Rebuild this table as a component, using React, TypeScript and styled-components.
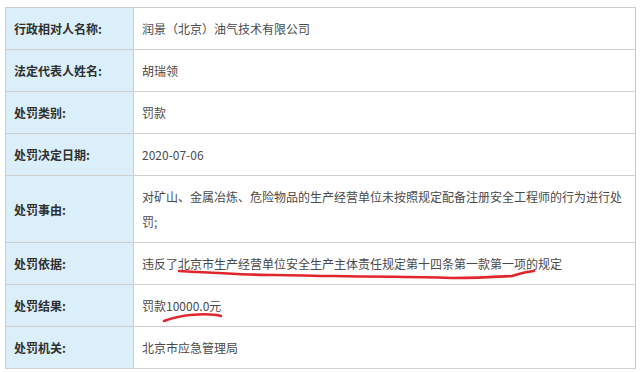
import React from 'react'
import styled, { createGlobalStyle } from 'styled-components'

const GlobalStyle = createGlobalStyle`
  body {
    margin: 0;
    background: #ffffff;
    font-family: "Noto Sans CJK SC", "Noto Sans", sans-serif;
  }
`

const Table = styled.div`
  display: grid;
  grid-template-columns: 128px 1fr;
  width: 631px;
  margin: 7px 0 0 5px;
  border: 1px solid #cbcbcb;
  border-bottom: none;
  box-sizing: border-box;
`

const Label = styled.div`
  background: #daeffa;
  color: #2f2f2f;
  font-size: 12px;
  font-weight: bold;
  line-height: 25px;
  padding: 8px 8px;
  border-right: 1px solid #cfcfcf;
  border-bottom: 1px solid #cfcfcf;
  display: flex;
  align-items: center;
`

const Value = styled.div`
  position: relative;
  color: #4a4a4a;
  font-size: 12px;
  line-height: 25px;
  padding: 8px 8px;
  border-bottom: 1px solid #cfcfcf;
  display: flex;
  align-items: center;
`

const Mark = styled.svg`
  position: absolute;
  left: 0;
  top: 0;
  width: 100%;
  height: 100%;
  pointer-events: none;
  overflow: visible;
`

const Scribble = ({ d }: { d: string }) => (
  <Mark>
    <path d={d} fill="none" stroke="#e1252c" strokeWidth={2.6} strokeLinecap="round" strokeLinejoin="round" />
  </Mark>
)

const rows: { label: string; value: string; mark?: string }[] = [
  { label: '行政相对人名称:', value: '润景（北京）油气技术有限公司' },
  { label: '法定代表人姓名:', value: '胡瑞领' },
  { label: '处罚类别:', value: '罚款' },
  { label: '处罚决定日期:', value: '2020-07-06' },
  {
    label: '处罚事由:',
    value: '对矿山、金属冶炼、危险物品的生产经营单位未按照规定配备注册安全工程师的行为进行处罚;',
  },
  {
    label: '处罚依据:',
    value: '违反了北京市生产经营单位安全生产主体责任规定第十四条第一款第一项的规定',
    mark: 'M45 28 C 80 30, 115 32, 140 32 S 175 33, 200 33 C 260 34, 300 34, 318 35 C 340 35, 360 34, 378 33 C 384 31, 390 29, 400 28',
  },
  {
    label: '处罚结果:',
    value: '罚款10000.0元',
    mark: 'M30 36 C 38 33, 46 31, 56 30 C 68 29, 80 29, 87 31',
  },
  { label: '处罚机关:', value: '北京市应急管理局' },
]

const App = () => (
  <>
    <GlobalStyle />
    <Table>
      {rows.map((row) => (
        <React.Fragment key={row.label}>
          <Label>{row.label}</Label>
          <Value>
            {row.value}
            {row.mark && <Scribble d={row.mark} />}
          </Value>
        </React.Fragment>
      ))}
    </Table>
  </>
)

export default App
